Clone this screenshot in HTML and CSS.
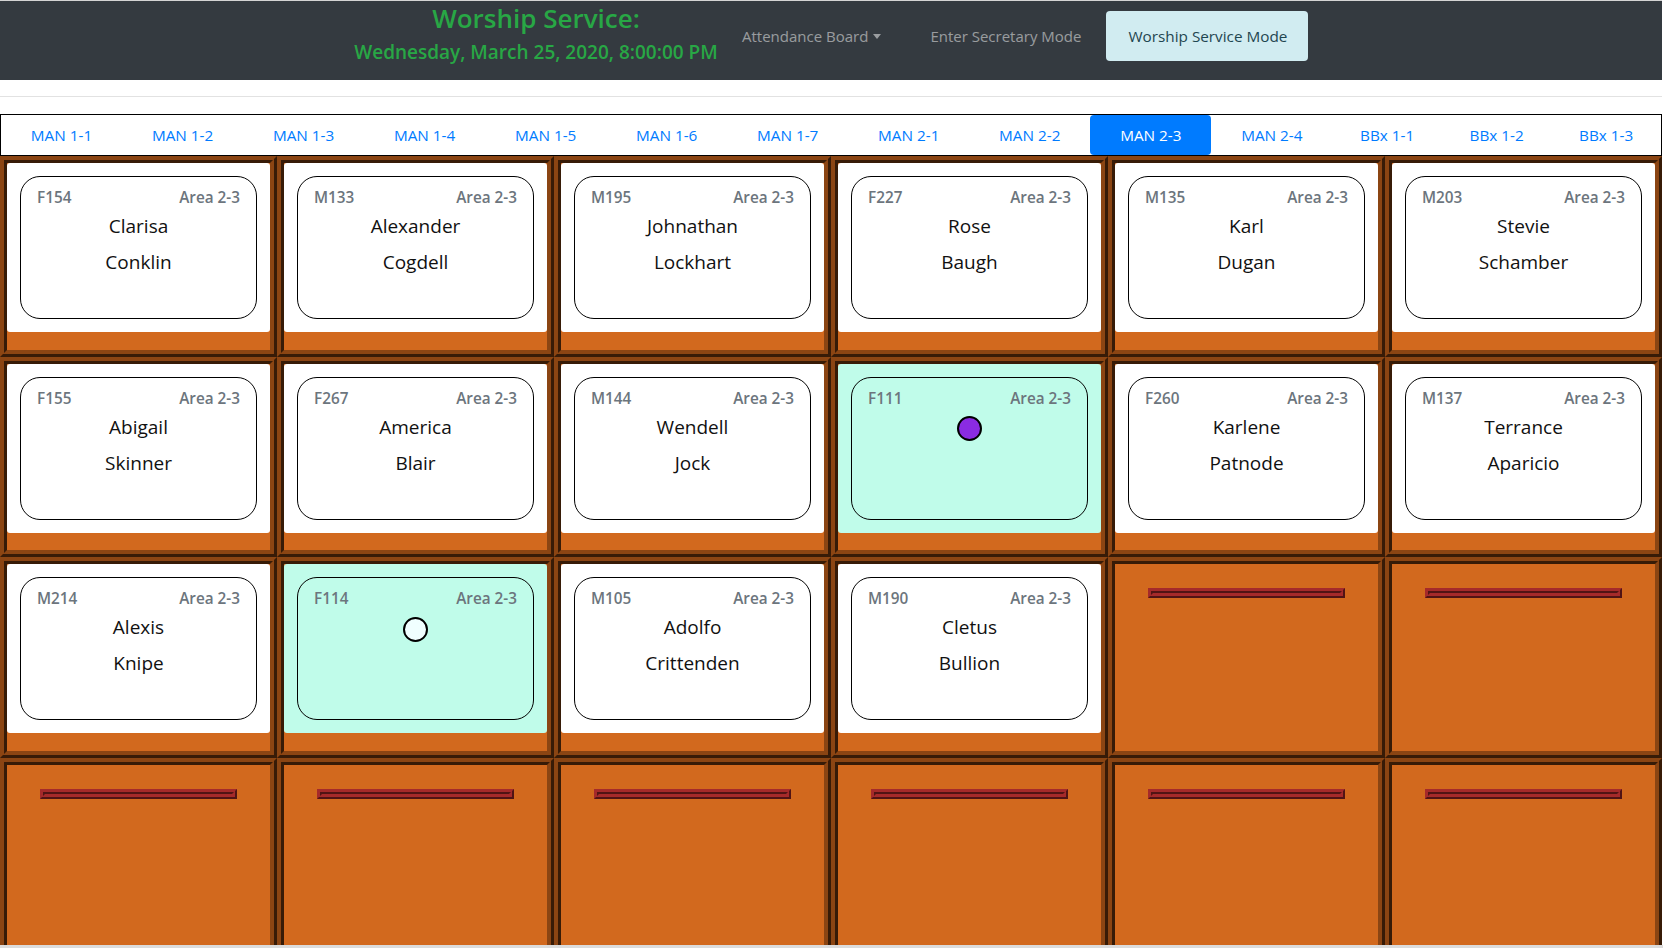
FILE: index.html
```html
<!DOCTYPE html>
<html lang="en">
<head>
<meta charset="utf-8">
<title>Attendance Board</title>
<link rel="stylesheet" href="styles.css">
</head>
<body>
<div class="page">
  <nav class="topbar">
    <div class="service">
      <h3 class="service-title">Worship Service:</h3>
      <h5 class="service-date">Wednesday, March 25, 2020, 8:00:00 PM</h5>
    </div>
    <ul class="menu">
      <li class="menu-item first"><a class="menu-link" href="#">Attendance Board<span class="caret"></span></a></li>
      <li class="menu-item second"><a class="menu-link" href="#">Enter Secretary Mode</a></li>
      <li class="menu-item third"><a class="menu-btn" href="#">Worship Service Mode</a></li>
    </ul>
  </nav>
  <hr class="divider">
  <nav class="tabs">
    <a class="tab" href="#">MAN 1-1</a>
    <a class="tab" href="#">MAN 1-2</a>
    <a class="tab" href="#">MAN 1-3</a>
    <a class="tab" href="#">MAN 1-4</a>
    <a class="tab" href="#">MAN 1-5</a>
    <a class="tab" href="#">MAN 1-6</a>
    <a class="tab" href="#">MAN 1-7</a>
    <a class="tab" href="#">MAN 2-1</a>
    <a class="tab" href="#">MAN 2-2</a>
    <a class="tab active" href="#">MAN 2-3</a>
    <a class="tab" href="#">MAN 2-4</a>
    <a class="tab tab-short" href="#">BBx 1-1</a>
    <a class="tab tab-short" href="#">BBx 1-2</a>
    <a class="tab tab-short" href="#">BBx 1-3</a>
  </nav>
  <div class="board">
    <!-- row 1 -->
    <div class="cell"><div class="desk"><div class="seat"><div class="seat-head"><span>F154</span><span>Area 2-3</span></div><div class="name">Clarisa</div><div class="name">Conklin</div></div></div></div>
    <div class="cell"><div class="desk"><div class="seat"><div class="seat-head"><span>M133</span><span>Area 2-3</span></div><div class="name">Alexander</div><div class="name">Cogdell</div></div></div></div>
    <div class="cell"><div class="desk"><div class="seat"><div class="seat-head"><span>M195</span><span>Area 2-3</span></div><div class="name">Johnathan</div><div class="name">Lockhart</div></div></div></div>
    <div class="cell"><div class="desk"><div class="seat"><div class="seat-head"><span>F227</span><span>Area 2-3</span></div><div class="name">Rose</div><div class="name">Baugh</div></div></div></div>
    <div class="cell"><div class="desk"><div class="seat"><div class="seat-head"><span>M135</span><span>Area 2-3</span></div><div class="name">Karl</div><div class="name">Dugan</div></div></div></div>
    <div class="cell"><div class="desk"><div class="seat"><div class="seat-head"><span>M203</span><span>Area 2-3</span></div><div class="name">Stevie</div><div class="name">Schamber</div></div></div></div>
    <!-- row 2 -->
    <div class="cell"><div class="desk"><div class="seat"><div class="seat-head"><span>F155</span><span>Area 2-3</span></div><div class="name">Abigail</div><div class="name">Skinner</div></div></div></div>
    <div class="cell"><div class="desk"><div class="seat"><div class="seat-head"><span>F267</span><span>Area 2-3</span></div><div class="name">America</div><div class="name">Blair</div></div></div></div>
    <div class="cell"><div class="desk"><div class="seat"><div class="seat-head"><span>M144</span><span>Area 2-3</span></div><div class="name">Wendell</div><div class="name">Jock</div></div></div></div>
    <div class="cell"><div class="desk present"><div class="seat"><div class="seat-head"><span>F111</span><span>Area 2-3</span></div><div class="name dot-line"><span class="dot dot-purple"></span></div></div></div></div>
    <div class="cell"><div class="desk"><div class="seat"><div class="seat-head"><span>F260</span><span>Area 2-3</span></div><div class="name">Karlene</div><div class="name">Patnode</div></div></div></div>
    <div class="cell"><div class="desk"><div class="seat"><div class="seat-head"><span>M137</span><span>Area 2-3</span></div><div class="name">Terrance</div><div class="name">Aparicio</div></div></div></div>
    <!-- row 3 -->
    <div class="cell"><div class="desk"><div class="seat"><div class="seat-head"><span>M214</span><span>Area 2-3</span></div><div class="name">Alexis</div><div class="name">Knipe</div></div></div></div>
    <div class="cell"><div class="desk present"><div class="seat"><div class="seat-head"><span>F114</span><span>Area 2-3</span></div><div class="name dot-line"><span class="dot dot-white"></span></div></div></div></div>
    <div class="cell"><div class="desk"><div class="seat"><div class="seat-head"><span>M105</span><span>Area 2-3</span></div><div class="name">Adolfo</div><div class="name">Crittenden</div></div></div></div>
    <div class="cell"><div class="desk"><div class="seat"><div class="seat-head"><span>M190</span><span>Area 2-3</span></div><div class="name">Cletus</div><div class="name">Bullion</div></div></div></div>
    <div class="cell"><div class="handle"></div></div>
    <div class="cell"><div class="handle"></div></div>
    <!-- row 4 -->
    <div class="cell"><div class="handle"></div></div>
    <div class="cell"><div class="handle"></div></div>
    <div class="cell"><div class="handle"></div></div>
    <div class="cell"><div class="handle"></div></div>
    <div class="cell"><div class="handle"></div></div>
    <div class="cell"><div class="handle"></div></div>
  </div>
</div>
<div class="scroll-edge"></div>
</body>
</html>
```
FILE: styles.css
```css
html, body {
  margin: 0;
  padding: 0;
}

body {
  font-family: "Open Sans", "Noto Sans", sans-serif;
  background: #fff;
  color: #212529;
  overflow: hidden;
  height: 948px;
}

.page {
  width: 1662px;
}

/* ---------- top bar ---------- */
.topbar {
  height: 79px;
  background: #343a40;
  border-top: 1px solid #d4d4d4;
  display: flex;
  align-items: flex-start;
}

.service {
  margin-left: 346px;
  width: 380px;
  text-align: center;
  color: #28a745;
}

.service-title {
  margin: 0;
  padding-top: 2px;
  font-size: 26px;
  font-weight: 600;
  line-height: 31px;
}

.service-date {
  margin: 7px 0 0;
  font-size: 19px;
  font-weight: 600;
  line-height: 23px;
}

.menu {
  list-style: none;
  margin: 10px 0 0;
  padding: 0;
  display: flex;
  align-items: center;
}

.menu-item.first { margin-left: 16px; }
.menu-item.second { margin-left: 49px; }
.menu-item.third { margin-left: 25px; }

.menu-link {
  display: block;
  color: rgba(255, 255, 255, 0.5);
  font-size: 15px;
  line-height: 50px;
  text-decoration: none;
}

.caret {
  display: inline-block;
  margin-left: 5px;
  vertical-align: 3px;
  border-top: 5px solid rgba(255, 255, 255, 0.5);
  border-left: 4px solid transparent;
  border-right: 4px solid transparent;
}

.menu-btn {
  display: block;
  height: 50px;
  line-height: 50px;
  padding: 0 21px 0 22px;
  border-radius: 4px;
  background: #d1ecf1;
  color: #1f4650;
  font-size: 15.3px;
  text-decoration: none;
}

/* ---------- divider ---------- */
.divider {
  margin: 16px 0 17px;
  height: 0;
  border: 0;
  border-top: 1px solid #e2e2e2;
}

/* ---------- tabs ---------- */
.tabs {
  display: flex;
  height: 40px;
  border: 1px solid #000;
}

.tab {
  flex: 1 1 121px;
  text-align: center;
  line-height: 40px;
  font-size: 15.3px;
  color: #007bff;
  text-decoration: none;
  border-radius: 4px;
  white-space: nowrap;
}

.tab.tab-short {
  flex-basis: 109.5px;
}

.tab.active {
  background: #007bff;
  color: #fff;
}

/* ---------- board ---------- */
.board {
  display: grid;
  grid-template-columns: repeat(6, 1fr);
  grid-auto-rows: 200.5px;
}

.cell {
  border: 7px ridge #8b4513;
  background: #d2691e;
}

.desk {
  height: 169px;
  box-sizing: border-box;
  padding: 13px;
  background: #fff;
  border-radius: 3px;
}

.desk.present {
  background: #c0fcea;
}

.seat {
  height: 143px;
  box-sizing: border-box;
  padding: 9px 16px 0;
  border: 1px solid #000;
  border-radius: 20px;
}

.seat-head {
  display: flex;
  justify-content: space-between;
  font-size: 15.3px;
  font-weight: 600;
  line-height: 22px;
  color: #6c757d;
}

.name {
  height: 36px;
  line-height: 36px;
  text-align: center;
  font-size: 19px;
  color: #111;
}

.dot-line {
  display: flex;
  align-items: center;
  justify-content: center;
}

.dot {
  width: 21px;
  height: 21px;
  margin-top: 4px;
  border: 2px solid #000;
  border-radius: 50%;
}

.dot-purple { background: #8a2be2; }
.dot-white { background: #f0ffff; }

.handle {
  width: 75%;
  height: 10px;
  box-sizing: border-box;
  margin: 24px auto 0;
  border: 5px ridge #a52a2a;
}

/* bottom edge of the browser's scroll area */
.scroll-edge {
  position: fixed;
  left: 0;
  right: 0;
  bottom: 0;
  height: 3px;
  background: #dcdcdc;
}
```
